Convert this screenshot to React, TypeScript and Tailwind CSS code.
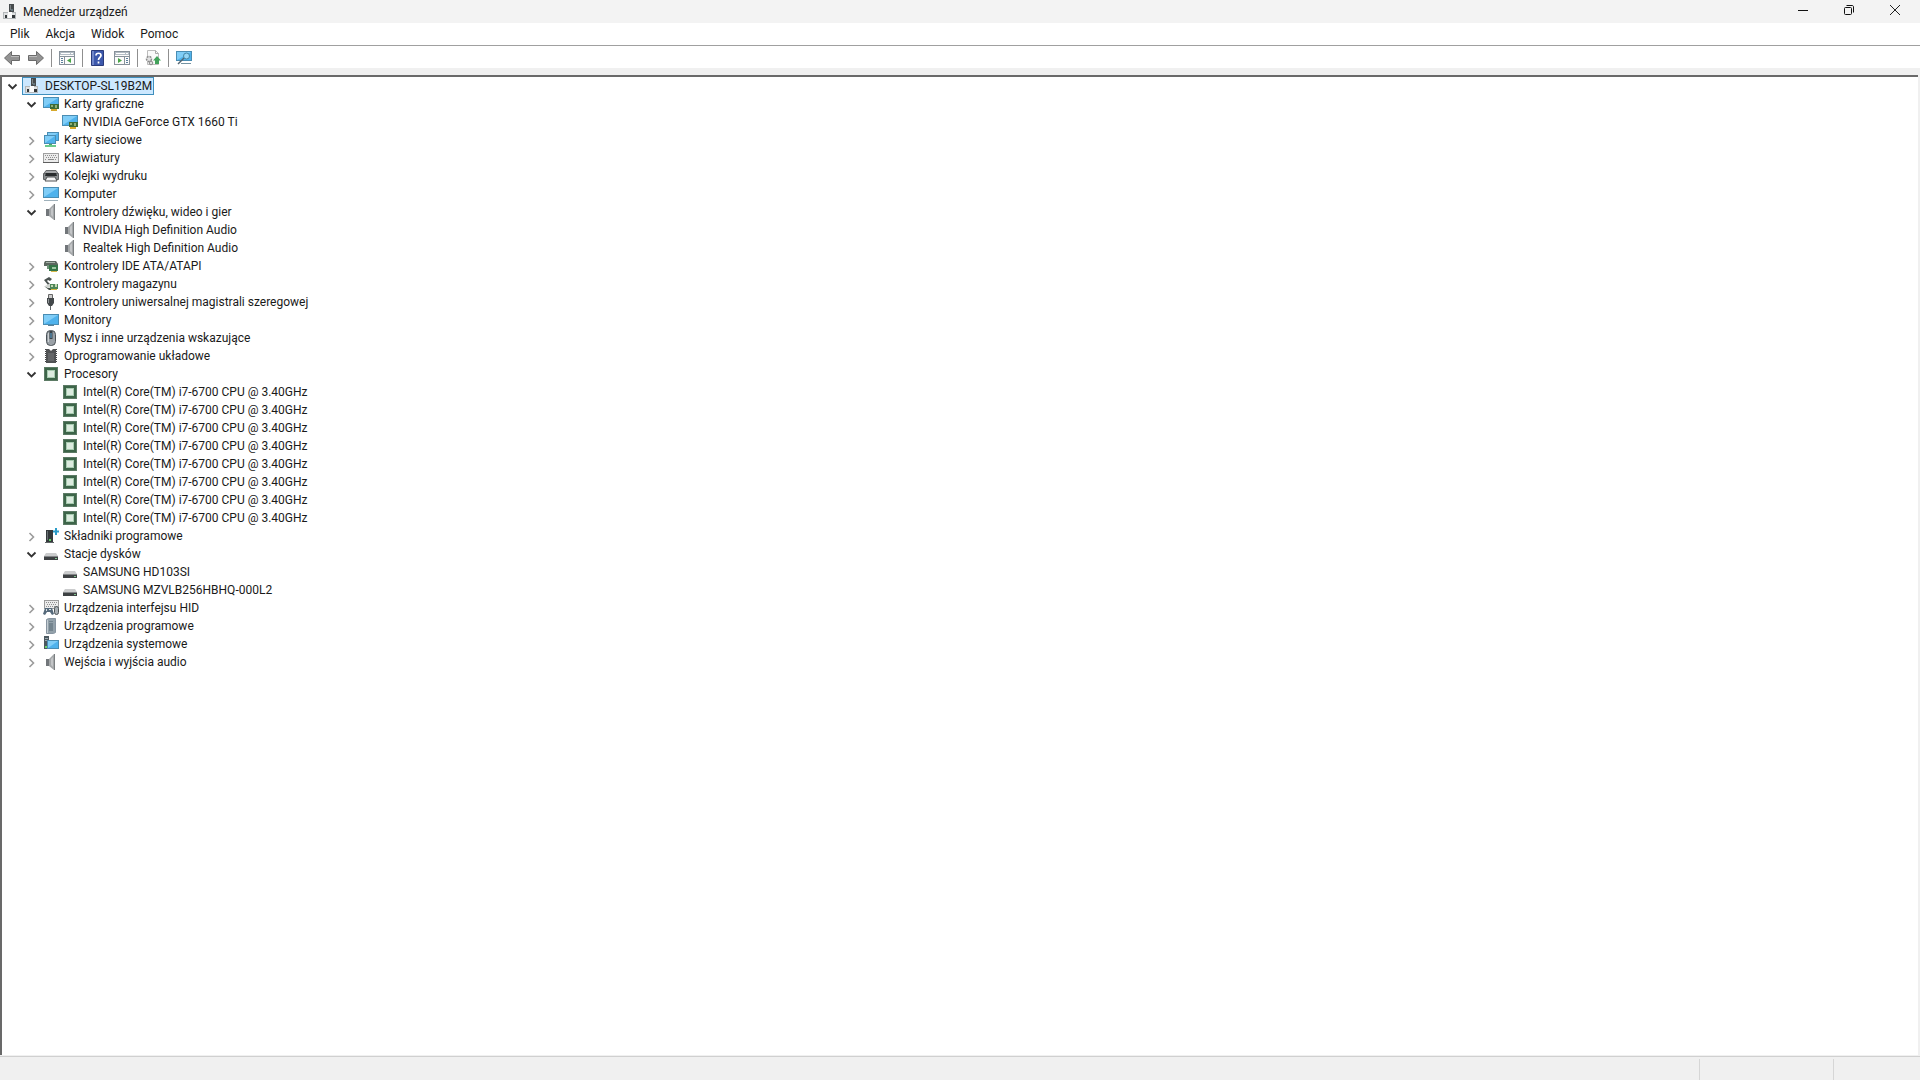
import type { ReactNode } from "react";

type IconName =
  | "root" | "gpu" | "network" | "keyboard" | "printer" | "computer" | "monitor" | "speaker"
  | "ide" | "storage" | "usb" | "mouse" | "firmware" | "cpu" | "software" | "disk" | "hid"
  | "softdevice" | "system";

function Svg({ children }: { children: ReactNode }) {
  return (
    <svg viewBox="0 0 16 16" className="size-4 shrink-0" aria-hidden="true">
      {children}
    </svg>
  );
}

function Screen({ x = 0, y = 2, w = 16, h = 10 }: { x?: number; y?: number; w?: number; h?: number }) {
  return (
    <>
      <rect x={x + 0.5} y={y + 0.5} width={w - 1} height={h - 1} fill="#4fb2ec" stroke="#4a8db3" />
      <path d={`M${x + 1} ${y + 1}h${w - 2}l-${w - 2} ${h - 2}z`} fill="#80cdf7" />
    </>
  );
}

const chipBoard = (
  <>
    <path d="M7 8h9v5H7z" fill="#3d6b35" />
    <path d="M8 9h2v2H8zM12 9h2v3h-2z" fill="#8fae76" />
    <path d="M8 13h6v2H8z" fill="#d6a92c" />
  </>
);

const icons: Record<IconName, ReactNode> = {
  root: (
    <>
      <path d="M7 0h5v8H7z" fill="#474b4d" />
      <path d="M8 1h1v5H8z" fill="#7c8386" />
      <path d="M1 8h13v7H1z" fill="#b3b7b9" />
      <path d="M2 9h11v5H2z" fill="#e0e2e3" />
      <path d="M6 8h4v6H6z" fill="#fbfbfb" />
      <path d="M3 11h2v3H3zM10 11h3v3h-3z" fill="#33383a" />
      <path d="M9 5h2v2H9z" fill="#63757c" />
    </>
  ),
  gpu: (
    <>
      <Screen y={1} h={11} />
      {chipBoard}
    </>
  ),
  network: (
    <>
      <Screen x={4} y={0} w={12} h={9} />
      <Screen x={1} y={3} w={12} h={9} />
      <path d="M6 12h3v2H6z" fill="#48a967" />
      <path d="M2 13h11v2H2z" fill="#6bc98b" />
    </>
  ),
  keyboard: (
    <>
      <rect x="0.500" y="3.500" width="15" height="9" fill="#ececec" stroke="#a0a0a0" />
      <path d="M2 5.500h12M3 7.500h11M2 9.500h2M12 9.500h2" stroke="#8f8f8f" strokeDasharray="1 1" />
      <path d="M5 9.500h6" stroke="#8b8b8b" />
      <path d="M0 12h16v1H0z" fill="#5e5e5e" />
    </>
  ),
  printer: (
    <>
      <path d="M3 2.500h10l2 3H1z" fill="#a6a8aa" stroke="#686b6d" />
      <path d="M0.500 5.500h15v6h-15z" fill="#8a8e90" stroke="#606365" />
      <path d="M3 5h10l1 3H2z" fill="#292c2e" />
      <path d="M4 9h8l2 4H2z" fill="#f6f6f6" stroke="#505354" />
    </>
  ),
  computer: (
    <>
      <Screen y={1} h={11} />
      <path d="M1 14h14v1H1z" fill="#9fb1bb" />
    </>
  ),
  monitor: (
    <>
      <Screen y={2} h={11} />
      <path d="M5 13h6v1H5z" fill="#5d8299" />
    </>
  ),
  speaker: (
    <>
      <path d="M3 5h3v7H3z" fill="#72767a" />
      <path d="M6 5l5-5v16l-5-4z" fill="#a4a7a9" />
      <path d="M8 5l2-2v10l-2-2z" fill="#c3c5c7" />
      <path d="M11 0h1v16h-1z" fill="#7b7f81" />
    </>
  ),
  ide: (
    <>
      <path d="M2 3h11l2 3v2H1V5z" fill="#5c675f" />
      <path d="M3 4h9v1H3z" fill="#a3afa6" />
      <path d="M4 7h3v4H4z" fill="#6d8f76" />
      <path d="M6 7h9v6H6z" fill="#347547" />
      <path d="M9 9h4v2H9z" fill="#9cc7a0" />
      <path d="M8 13h6v1H8z" fill="#d7b84b" />
    </>
  ),
  storage: (
    <>
      <path d="M1 4l5-3 3 2-2 2-2-1-1 1 3 3-2 1z" fill="#4b5351" />
      <path d="M2 10l4-2 3 2-3 2z" fill="#cfd4cf" />
      <path d="M1 10l5 4h2v-2H5z" fill="#455049" />
      <path d="M7 8h8v5H7z" fill="#4e8656" />
      <path d="M8 9h2v2H8zM12 8h2v3h-2z" fill="#c3d6b2" />
      <path d="M8 13h6v1H8z" fill="#d5b73d" />
    </>
  ),
  usb: (
    <>
      <path d="M5.500 0.500h4v4h-4z" fill="#ccc" stroke="#666" />
      <path d="M4 4h7v5l-2 3H6l-2-3z" fill="#43484a" />
      <path d="M5 5h1v4H5z" fill="#8f9496" />
      <path d="M7 12h1v4H7z" fill="#5f6466" />
    </>
  ),
  mouse: (
    <>
      <rect x="3.500" y="0.500" width="9" height="15" rx="4" fill="#9aa1a7" stroke="#4c5358" />
      <path d="M5.500 3v9" stroke="#ccd1d4" />
      <path d="M8 1v8" stroke="#3a4349" strokeWidth="3" />
      <path d="M8 3v5" stroke="#5ea9da" />
    </>
  ),
  firmware: (
    <>
      <path d="M3 1h3l2 2 2-2h3v14H3z" fill="#505254" />
      <path d="M2.500 1v14M13.500 1v14" stroke="#424446" strokeDasharray="1 1" />
      <path d="M5 5h6v8H5z" fill="#646668" />
    </>
  ),
  cpu: (
    <>
      <rect x="1.500" y="1.500" width="13" height="13" fill="none" stroke="#5c7b65" />
      <path d="M2 2h12v12H2z" fill="#3d6549" />
      <path d="M4 4h8v8H4z" fill="#a7cbb0" />
      <path d="M5 5h6v6H5z" fill="#dcebdf" />
    </>
  ),
  software: (
    <>
      <path d="M3 2h7v12H3z" fill="#34393b" />
      <path d="M4 3h1v9H4z" fill="#697174" />
      <path d="M6 11h2v2H6z" fill="#5fcb62" />
      <path d="M2 14h9v1H2z" fill="#616668" />
      <path d="M13 0v7M10 3.500h6" stroke="#2b9cc9" strokeWidth="2" />
    </>
  ),
  disk: (
    <>
      <path d="M3 7h10l2 3H1z" fill="#cbcccd" />
      <path d="M1 10h14v4H1z" fill="#3e4143" />
      <path d="M1 10h14v1H1z" fill="#838688" />
      <path d="M12 12h2v1h-2z" fill="#83c590" />
    </>
  ),
  hid: (
    <>
      <rect x="1.500" y="0.500" width="14" height="8" fill="#ececec" stroke="#9b9b9b" />
      <path d="M3 2.500h11M4 4.500h10M3 6.500h11" stroke="#8f8f8f" strokeDasharray="1 1" />
      <path d="M0 14l2-6h7l2 6-2 1-2-3H4l-2 3z" fill="#566a7b" />
      <path d="M3 9h1v2H3zM6 9h2v1H6z" fill="#d9e0e5" />
      <rect x="11.500" y="6.500" width="4" height="8" rx="2" fill="#a9b0b5" stroke="#4e5559" />
    </>
  ),
  softdevice: (
    <>
      <path d="M3.500 1.500l2-1h7v14l-2 1h-7z" fill="#93a1aa" stroke="#8794a0" />
      <path d="M6 3h4v1H6zM6 5h4v8H6z" fill="#74848e" />
      <path d="M4 2h1v13H4z" fill="#c4cdd2" />
    </>
  ),
  system: (
    <>
      <path d="M1 0h5v13H1z" fill="#4c5960" />
      <path d="M2 2h3v1H2zM2 4h3v1H2z" fill="#9ba8af" />
      <path d="M2 10h2v2H2z" fill="#6cd26d" />
      <Screen x={4} y={4} w={12} h={9} />
    </>
  ),
};

interface DeviceNode {
  label: string;
  icon: IconName;
  state?: "open" | "closed";
  children?: DeviceNode[];
}

const closed = (label: string, icon: IconName): DeviceNode => ({ label, icon, state: "closed" });

const tree: DeviceNode = {
  label: "DESKTOP-SL19B2M",
  icon: "root",
  state: "open",
  children: [
    {
      label: "Karty graficzne",
      icon: "gpu",
      state: "open",
      children: [{ label: "NVIDIA GeForce GTX 1660 Ti", icon: "gpu" }],
    },
    closed("Karty sieciowe", "network"),
    closed("Klawiatury", "keyboard"),
    closed("Kolejki wydruku", "printer"),
    closed("Komputer", "computer"),
    {
      label: "Kontrolery dźwięku, wideo i gier",
      icon: "speaker",
      state: "open",
      children: [
        { label: "NVIDIA High Definition Audio", icon: "speaker" },
        { label: "Realtek High Definition Audio", icon: "speaker" },
      ],
    },
    closed("Kontrolery IDE ATA/ATAPI", "ide"),
    closed("Kontrolery magazynu", "storage"),
    closed("Kontrolery uniwersalnej magistrali szeregowej", "usb"),
    closed("Monitory", "monitor"),
    closed("Mysz i inne urządzenia wskazujące", "mouse"),
    closed("Oprogramowanie układowe", "firmware"),
    {
      label: "Procesory",
      icon: "cpu",
      state: "open",
      children: Array.from({ length: 8 }, () => ({
        label: "Intel(R) Core(TM) i7-6700 CPU @ 3.40GHz",
        icon: "cpu" as const,
      })),
    },
    closed("Składniki programowe", "software"),
    {
      label: "Stacje dysków",
      icon: "disk",
      state: "open",
      children: [
        { label: "SAMSUNG HD103SI", icon: "disk" },
        { label: "SAMSUNG MZVLB256HBHQ-000L2", icon: "disk" },
      ],
    },
    closed("Urządzenia interfejsu HID", "hid"),
    closed("Urządzenia programowe", "softdevice"),
    closed("Urządzenia systemowe", "system"),
    closed("Wejścia i wyjścia audio", "speaker"),
  ],
};

function Expander({ node }: { node: DeviceNode }) {
  if (!node.state) return <span className="w-4 shrink-0" />;
  const open = node.state === "open";
  return (
    <button type="button" aria-label={`${open ? "Zwiń" : "Rozwiń"}: ${node.label}`} className="size-4 shrink-0">
      <svg viewBox="0 0 16 16" className="size-4" fill="none" aria-hidden="true">
        {open ? (
          <path d="M4.500 6.500l4 4 4-4" stroke="#333" strokeWidth="1.800" />
        ) : (
          <path d="M6.500 5l4 4-4 4" stroke="#9b9b9b" strokeWidth="1.600" />
        )}
      </svg>
    </button>
  );
}

function TreeItem({ node, selected = false }: { node: DeviceNode; selected?: boolean }) {
  return (
    <li role="treeitem" aria-selected={selected} aria-expanded={node.state ? node.state === "open" : undefined}>
      <div className="flex h-[18px] items-center gap-0.5">
        <Expander node={node} />
        <span
          className={
            selected
              ? "flex h-[18px] items-center gap-[5px] border border-[#3f8fbd] bg-[#cce8ff] px-px"
              : "flex h-[18px] items-center gap-[5px] border border-transparent px-px"
          }
        >
          <Svg>{icons[node.icon]}</Svg>
          <span className="whitespace-nowrap leading-4">{node.label}</span>
        </span>
      </div>
      {node.children && (
        <ul role="group" className="pl-[19px]">
          {node.children.map((child, i) => (
            <TreeItem key={i} node={child} />
          ))}
        </ul>
      )}
    </li>
  );
}

function ToolButton({ label, children }: { label: string; children: ReactNode }) {
  return (
    <button type="button" aria-label={label} className="flex size-6 items-center justify-center">
      {children}
    </button>
  );
}

const Separator = () => <span className="mx-[3px] h-[18px] w-px bg-[#8f8f8f]" />;

function Arrow({ forward = false }: { forward?: boolean }) {
  return (
    <svg viewBox="0 0 16 16" className="size-4" aria-hidden="true">
      <path
        d={forward ? "M15.500 8l-7-6.500v4h-8v5h8v4z" : "M0.500 8l7-6.500v4h8v5h-8v4z"}
        fill="#939393"
        stroke="#6a6a6a"
      />
      <path d={forward ? "M1 6.500h8" : "M7 6.500h8"} stroke="#bcbcbc" />
    </svg>
  );
}

function PaneIcon({ right = false }: { right?: boolean }) {
  return (
    <Svg>
      <rect x="0.500" y="1.500" width="15" height="13" fill="#fbfbfb" stroke="#87919a" />
      <path d="M1 2h14v3H1z" fill="#b4bdc5" />
      <path d="M2 3.500h9M12 3.500h2" stroke="#fff" />
      <path d={right ? "M1 6.500h14M10.500 7v7" : "M1 6.500h14M5.500 7v7"} stroke="#87919a" />
      <path
        d={right ? "M12 8.500h2M12 10.500h2M12 12.500h2" : "M2 8.500h2M2 10.500h2M2 12.500h2"}
        stroke="#5b7f9c"
      />
      <path d={right ? "M4 8l4 2.500-4 2.500z" : "M12 8l-4 2.500 4 2.500z"} fill="#4aa548" />
    </Svg>
  );
}

function Toolbar() {
  return (
    <div role="toolbar" className="flex h-[22px] items-center bg-white pt-0.5">
      <ToolButton label="Wstecz"><Arrow /></ToolButton>
      <ToolButton label="Dalej"><Arrow forward /></ToolButton>
      <Separator />
      <ToolButton label="Pokaż/ukryj drzewo konsoli"><PaneIcon /></ToolButton>
      <Separator />
      <ToolButton label="Pomoc">
        <Svg>
          <path d="M1.500 0.500h12v15h-12z" fill="#3c58ac" stroke="#2a3b7b" />
          <path d="M2 1h2v14H2z" fill="#6f86c9" />
          <path d="M6 5.500c0-3 5-3 5 0 0 2-2.500 2-2.500 4.500M8.500 11.500v2" fill="none" stroke="#fff" strokeWidth="1.700" />
        </Svg>
      </ToolButton>
      <ToolButton label="Pokaż/ukryj okienko akcji"><PaneIcon right /></ToolButton>
      <Separator />
      <ToolButton label="Skanuj w poszukiwaniu zmian sprzętu">
        <Svg>
          <path d="M2.500 0.500h8l3 3v11h-11z" fill="#fafafa" stroke="#bcbcbc" />
          <path d="M10.500 0.500v3h3" fill="none" stroke="#aaa" />
          <circle cx="4" cy="9" r="2.500" fill="#e1e1e1" stroke="#8b8b8b" strokeWidth="1.500" strokeDasharray="2 1" />
          <circle cx="6" cy="13" r="1.800" fill="#ddd" stroke="#8b8b8b" />
          <path d="M12 6l4 4.500h-2V14h-4v-3.500H8z" fill="#42a25b" />
        </Svg>
      </ToolButton>
      <Separator />
      <ToolButton label="Dodaj sterowniki">
        <Svg>
          <Screen x={0} y={1} w={16} h={10} />
          <circle cx="10.500" cy="6" r="3" fill="#95d5f5" stroke="#4487a8" />
          <path d="M8 8l-6 6" stroke="#536570" strokeWidth="1.500" />
          <path d="M5 13.500h10" stroke="#7593a2" />
        </Svg>
      </ToolButton>
    </div>
  );
}

function TitleBar() {
  return (
    <header className="flex h-[23px] items-center justify-between bg-[#f3f3f3]">
      <div className="flex items-center gap-[5px] pl-0.5">
        <Svg>{icons.root}</Svg>
        <h1 className="leading-4">Menedżer urządzeń</h1>
      </div>
      <div className="flex h-5 self-start pr-0.5">
        <button type="button" aria-label="Minimalizuj" className="flex w-[46px] items-center justify-center">
          <svg viewBox="0 0 12 12" className="size-3" aria-hidden="true">
            <path d="M1 6.500h10" stroke="#111" />
          </svg>
        </button>
        <button type="button" aria-label="Przywróć w dół" className="flex w-[46px] items-center justify-center">
          <svg viewBox="0 0 12 12" className="size-3" fill="none" stroke="#111" aria-hidden="true">
            <rect x="1.500" y="3.500" width="7" height="7" rx="1" />
            <path d="M3.500 1.500H9c1 0 1.500.5 1.500 1.500v5.500" />
          </svg>
        </button>
        <button type="button" aria-label="Zamknij" className="flex w-[46px] items-center justify-center">
          <svg viewBox="0 0 12 12" className="size-3" aria-hidden="true">
            <path d="M1 1l10 10M11 1L1 11" stroke="#222" />
          </svg>
        </button>
      </div>
    </header>
  );
}

export default function App() {
  return (
    <div className="flex min-h-screen flex-col bg-[#f0f0f0] font-['Segoe_UI',Roboto,sans-serif] text-[12px] text-[#1a1a1a]">
      <TitleBar />
      <nav className="flex h-[22px] items-center gap-4 bg-white px-2.5 leading-4">
        {["Plik", "Akcja", "Widok", "Pomoc"].map((item) => (
          <button key={item} type="button">{item}</button>
        ))}
      </nav>
      <div className="h-px bg-[#a0a0a0]" />
      <Toolbar />
      <main className="mt-[7px] mr-0.5 flex-1 border-t-2 border-l-2 border-[#696969] bg-white pl-0.5">
        <ul role="tree" aria-label="Urządzenia">
          <TreeItem node={tree} selected />
        </ul>
      </main>
      <footer className="mt-px flex h-6 justify-end border-t border-[#d0d0d0]">
        <span className="mt-0.5 w-[134px] border-l border-[#d6d6d6]" />
        <span className="mt-0.5 w-[87px] border-l border-[#d6d6d6]" />
      </footer>
    </div>
  );
}
